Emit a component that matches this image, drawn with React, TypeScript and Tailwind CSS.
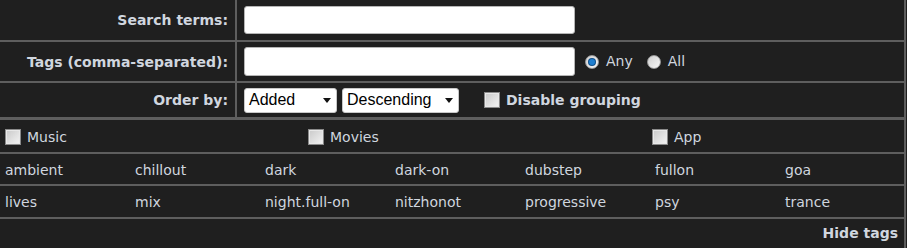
const tags = [
  ["ambient", "chillout", "dark", "dark-on", "dubstep", "fullon", "goa"],
  ["lives", "mix", "night.full-on", "nitzhonot", "progressive", "psy", "trance"],
];

function Checkbox() {
  return (
    <span className="inline-block w-[16px] h-[16px] border border-[#8a8a8a] bg-gradient-to-br from-[#c9c9c9] to-[#f4f4f4] shadow-[inset_0_0_0_1px_#e8e8e8] shrink-0" />
  );
}

function Radio({ checked = false }: { checked?: boolean }) {
  return (
    <span className="w-[14px] h-[14px] rounded-full border border-[#9a9a9a] bg-gradient-to-br from-[#d0d0d0] to-[#f8f8f8] flex items-center justify-center shrink-0">
      {checked && <span className="w-[6px] h-[6px] rounded-full bg-[#1f7fd0] ring-1 ring-[#0e4f8a]" />}
    </span>
  );
}

function Select({ label, width }: { label: string; width: string }) {
  return (
    <div className={`${width} h-[25px] bg-white rounded-[3px] border border-[#c8c8c8] flex items-center justify-between pl-[4px] pr-[5px] text-black text-[16px] font-['Liberation_Sans',Arial,sans-serif]`}>
      <span>{label}</span>
      <svg width="8" height="5" viewBox="0 0 8 5"><path d="M0 0h8L4 5z" fill="#111" /></svg>
    </div>
  );
}

function Label({ children }: { children: string }) {
  return (
    <div className="w-[237px] border-r-2 border-[#5e5e5e] flex items-center justify-end pr-[7px] pt-[1px] font-bold">
      {children}
    </div>
  );
}

export default function App() {
  return (
    <div className="w-[907px] h-[248px] bg-[#1f1f1f] overflow-hidden">
      <div className="w-[906px] h-[248px] border-r-2 border-[#5e5e5e] text-[#d0d6df] text-[14px] font-['DejaVu_Sans',Verdana,sans-serif] flex flex-col">
        {/* search terms */}
        <div className="h-[42px] border-b-2 border-[#5e5e5e] flex">
          <Label>Search terms:</Label>
          <div className="flex items-center pl-[7px]">
            <div className="w-[331px] h-[28px] bg-white rounded-[3px] border border-[#b5b5b5]" />
          </div>
        </div>

        {/* tags input */}
        <div className="h-[41px] border-b-2 border-[#5e5e5e] flex">
          <Label>Tags (comma-separated):</Label>
          <div className="flex items-center pl-[7px]">
            <div className="w-[331px] h-[29px] bg-white rounded-[3px] border border-[#b5b5b5]" />
            <div className="flex items-center ml-[10px] gap-[7px]">
              <Radio checked />
              <span>Any</span>
            </div>
            <div className="flex items-center ml-[14px] gap-[7px]">
              <Radio />
              <span>All</span>
            </div>
          </div>
        </div>

        {/* order */}
        <div className="h-[37px] border-b-[3px] border-[#5e5e5e] flex">
          <Label>Order by:</Label>
          <div className="flex items-center pl-[7px]">
            <Select label="Added" width="w-[93px]" />
            <div className="ml-[5px]">
              <Select label="Descending" width="w-[117px]" />
            </div>
            <div className="flex items-center ml-[25px] gap-[6px] font-bold">
              <Checkbox />
              <span>Disable grouping</span>
            </div>
          </div>
        </div>

        {/* categories */}
        <div className="h-[34px] border-b-2 border-[#5e5e5e] grid grid-cols-[303px_344px_1fr]">
          {["Music", "Movies", "App"].map((c) => (
            <div key={c} className="flex items-center gap-[6px] pl-[5px] pt-[2px]">
              <Checkbox />
              <span>{c}</span>
            </div>
          ))}
        </div>

        {/* tags */}
        {tags.map((row, i) => (
          <div key={i} className={`${i === 0 ? "h-[32px]" : "h-[33px]"} border-b-2 border-[#5e5e5e] grid grid-cols-[repeat(7,130px)]`}>
            {row.map((t) => (
              <div key={t} className="flex items-center pl-[5px] pt-[2px]">
                {t}
              </div>
            ))}
          </div>
        ))}

        <div className="flex-1 flex items-center justify-end pr-[6px] font-bold">Hide tags</div>
      </div>
    </div>
  );
}
